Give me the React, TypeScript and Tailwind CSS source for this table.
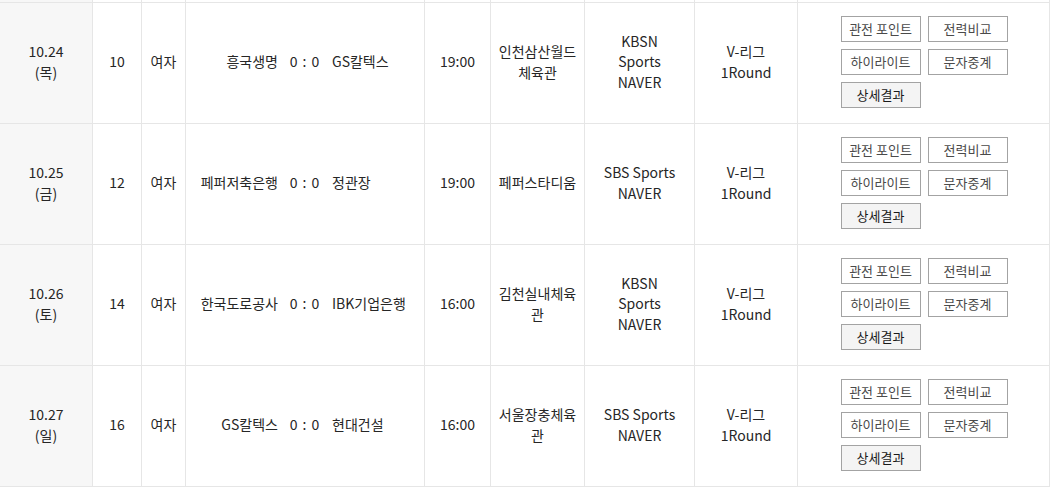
import React from "react";

type Match = {
  date: string;
  day: string;
  no: number;
  home: string;
  away: string;
  time: string;
  venue: string[];
  tv: string[];
};

const matches: Match[] = [
  { date: "10.24", day: "(목)", no: 10, home: "흥국생명", away: "GS칼텍스", time: "19:00", venue: ["인천삼산월드", "체육관"], tv: ["KBSN", "Sports", "NAVER"] },
  { date: "10.25", day: "(금)", no: 12, home: "페퍼저축은행", away: "정관장", time: "19:00", venue: ["페퍼스타디움"], tv: ["SBS Sports", "NAVER"] },
  { date: "10.26", day: "(토)", no: 14, home: "한국도로공사", away: "IBK기업은행", time: "16:00", venue: ["김천실내체육", "관"], tv: ["KBSN", "Sports", "NAVER"] },
  { date: "10.27", day: "(일)", no: 16, home: "GS칼텍스", away: "현대건설", time: "16:00", venue: ["서울장충체육", "관"], tv: ["SBS Sports", "NAVER"] },
];

const cols = "grid grid-cols-[93px_49px_44px_239px_66px_94px_110px_103px_252px] h-[121px]";
const cell = "border-r border-b border-[#e6e6e6] flex flex-col items-center justify-center text-center pb-[3px]";

const Btn = ({ label, strong }: { label: string; strong?: boolean }) => (
  <button
    className={
      "w-[80px] h-[26px] border border-[#a3a3a3] text-[13px] leading-none " +
      (strong ? "bg-[#f4f4f4] text-[#1a1a1a]" : "bg-white text-[#4a4a4a]")
    }
  >
    {label}
  </button>
);

export default function App() {
  return (
    <div
      className="w-[1051px] h-[487px] bg-white overflow-hidden text-[14px] leading-[20.5px] text-[#262626]"
      style={{ fontFamily: '"Noto Sans CJK KR", "Noto Sans", sans-serif' }}
    >
      {/* tail of the previous row */}
      <div className="grid grid-cols-[93px_49px_44px_239px_66px_94px_110px_103px_252px] h-[3px]">
        <div className="border-r border-b border-[#e6e6e6] bg-[#f7f7f7]" />
        {Array.from({ length: 8 }).map((_, i) => (
          <div key={i} className="border-r border-b border-[#e6e6e6]" />
        ))}
      </div>

      {matches.map((m) => (
        <div key={m.no} className={cols}>
          <div className={cell + " bg-[#f7f7f7]"}>
            <span>{m.date}</span>
            <span>{m.day}</span>
          </div>
          <div className={cell}>{m.no}</div>
          <div className={cell}>여자</div>
          <div className={cell + " !flex-row"}>
            <span className="flex-1 text-right">{m.home}</span>
            <span className="w-[54px] shrink-0 text-center tracking-[1px]">0 : 0</span>
            <span className="flex-1 text-left">{m.away}</span>
          </div>
          <div className={cell}>{m.time}</div>
          <div className={cell}>
            {m.venue.map((v) => (
              <span key={v}>{v}</span>
            ))}
          </div>
          <div className={cell}>
            {m.tv.map((t) => (
              <span key={t}>{t}</span>
            ))}
          </div>
          <div className={cell}>
            <span>V-리그</span>
            <span>1Round</span>
          </div>
          <div className={cell}>
            <div className="w-[168px] flex flex-wrap gap-x-[7px] gap-y-[7px] pl-[1px]">
              <Btn label="관전 포인트" />
              <Btn label="전력비교" />
              <Btn label="하이라이트" />
              <Btn label="문자중계" />
              <Btn label="상세결과" strong />
            </div>
          </div>
        </div>
      ))}
    </div>
  );
}
